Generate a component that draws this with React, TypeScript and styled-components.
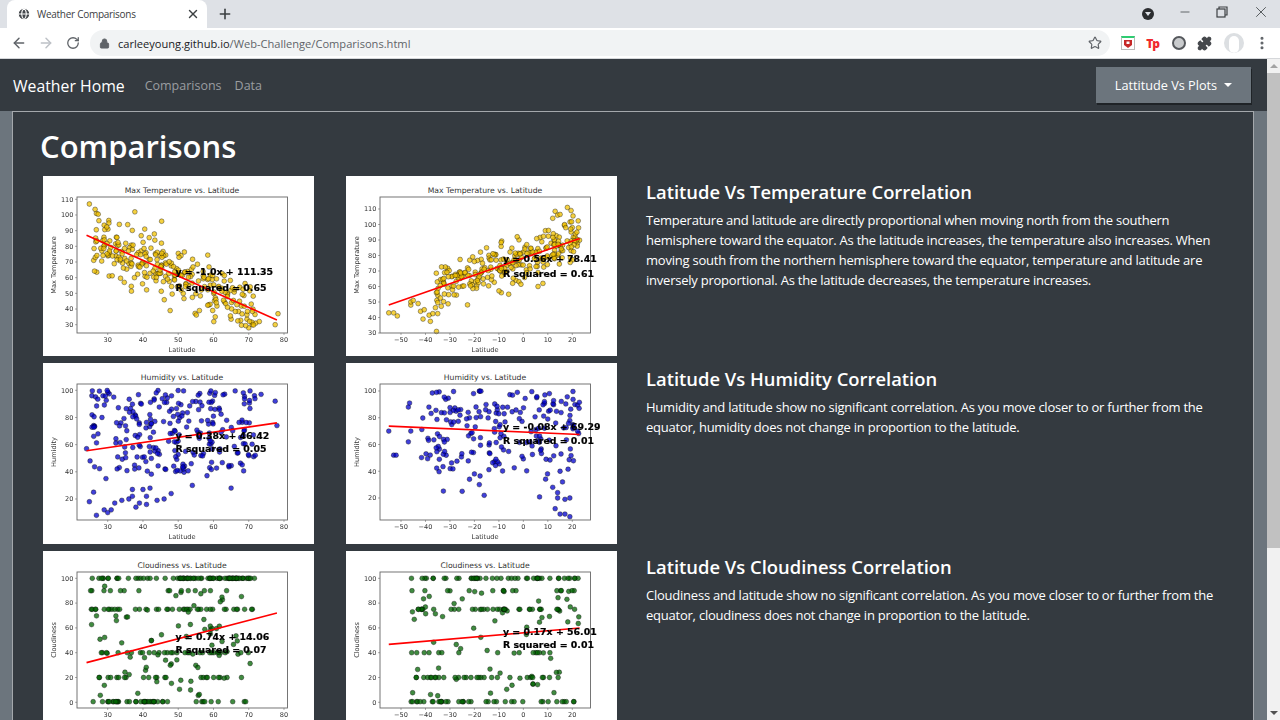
import React from "react";
import styled, { createGlobalStyle } from "styled-components";
import { ArrowLeft, ArrowRight, RotateCw, Lock, Star, Plus, X, Minus, Globe, Puzzle, EllipsisVertical } from "lucide-react";

const GlobalStyle = createGlobalStyle`
  html, body {
    margin: 0;
    height: 720px;
    overflow: hidden;
    background: #6c757d;
    font-family: "Open Sans", "Noto Sans", sans-serif;
  }
  * { box-sizing: border-box; }
`;

type Pt = [number, number];

interface ChartConfig {
  title: string;
  yLabel: string;
  color: string;
  plotX: [number, number, number, number]; // lat a, px a, lat b, px b
  plotY: [number, number, number, number];
  xTicks: number[];
  yTicks: number[];
  line: [Pt, Pt];
  notes: [string, string];
  noteX: number;
  noteY: number;
  noteGap: number;
  belowFold?: boolean;
  points: Pt[];
}

// small seeded generator so the scatter is the same every load
const rng = (seed: number) => () => {
  seed = (seed + 0x6d2b79f5) | 0;
  let t = Math.imul(seed ^ (seed >>> 15), 1 | seed);
  t = (t + Math.imul(t ^ (t >>> 7), 61 | t)) ^ t;
  return ((t ^ (t >>> 14)) >>> 0) / 4294967296;
};

const bell = (r: () => number) => (r() + r() + r()) / 1.5 - 1;

const temps = (seed: number, n: number, from: number, to: number, fn: (x: number) => number, spread: number, extra: Pt[]) => {
  const r = rng(seed);
  const out: Pt[] = [...extra];
  for (let i = 0; i < n; i++) {
    const x = from + (to - from) * r();
    out.push([x, fn(x) + bell(r) * spread]);
  }
  return out;
};

const humid = (seed: number, n: number, from: number, to: number, extra: Pt[]) => {
  const r = rng(seed);
  const out: Pt[] = [...extra];
  for (let i = 0; i < n; i++) {
    const x = from + (to - from) * r();
    out.push([x, 100 - Math.pow(r(), 1.25) * 60 - (r() > 0.85 ? r() * 20 : 0)]);
  }
  return out;
};

// cloud cover readings bunch on round values, and the low rows sit at one end of the range
const clouds = (seed: number, n: number, from: number, to: number, split: number) => {
  const r = rng(seed);
  const out: Pt[] = [];
  for (let i = 0; i < n; i++) {
    const x = from + (to - from) * r();
    const pick = r();
    if (pick < 0.24) out.push([x, 5 + r() * 90]);
    else if (pick < 0.36) out.push([x, 75]);
    else if (pick < 0.42) out.push([x, 90]);
    else if (pick < 0.5) out.push([x, 40]);
    else if (pick < 0.6) out.push([x, 20]);
    else if (x < split) out.push([x, r() > 0.35 ? 0.5 : 100]);
    else out.push([x, r() > 0.2 ? 100 : 0.5]);
  }
  return out;
};

const northX: [number, number, number, number] = [30, 64.7, 80, 241];
const southX: [number, number, number, number] = [-50, 55, 20, 226.3];
const northTicks = [30, 40, 50, 60, 70, 80];
const southTicks = [-50, -40, -30, -20, -10, 0, 10, 20];

const charts: ChartConfig[][] = [
  [
    {
      title: "Max Temperature vs. Latitude",
      yLabel: "Max Temperature",
      color: "#f2c200",
      plotX: northX,
      plotY: [110, 23.3, 30, 148.7],
      xTicks: northTicks,
      yTicks: [30, 40, 50, 60, 70, 80, 90, 100, 110],
      line: [[24, 87], [78, 33]],
      notes: ["y = -1.0x + 111.35", "R squared = 0.65"],
      noteX: 132.5,
      noteY: 99,
      noteGap: 15.7,
      points: temps(11, 270, 26, 72, (x) => 111.35 - x, 26, [
        [24.8, 107], [26.8, 101], [27.3, 100.5], [37.7, 102], [45.3, 96], [30.3, 96.5], [33.3, 94], [29, 93.5],
        [40.5, 91], [26.9, 63.5], [34.7, 57], [36.7, 54.5], [70, 28], [71, 30], [72, 31], [73, 32], [77.5, 30],
        [78.3, 37], [65, 33.5], [60.5, 35], [69.5, 33.5],
      ]),
    },
    {
      title: "Max Temperature vs. Latitude",
      yLabel: "Max Temperature",
      color: "#f2c200",
      plotX: southX,
      plotY: [110, 33, 30, 157],
      xTicks: southTicks,
      yTicks: [30, 40, 50, 60, 70, 80, 90, 100, 110],
      line: [[-55, 48], [23, 91]],
      notes: ["y = 0.56x + 78.41", "R squared = 0.61"],
      noteX: 157,
      noteY: 86,
      noteGap: 15,
      points: temps(23, 260, -36, 23, (x) => 78.41 + 0.56 * x, 20, [
        [-55, 43], [-53, 43], [-51.5, 41], [-41, 39], [-38, 37.5], [-35.5, 31], [-38.5, 41.5], [-37, 42.5],
        [-35, 42.5], [18, 111], [19.5, 109], [20.3, 105.5], [13, 108.5], [14, 106], [15, 106.5], [12, 104],
        [9, 96], [20, 98], [-6, 55], [-9, 56], [-3, 64], [6, 60], [8, 62], [6, 69], [-46, 48], [-46, 50],
        [-45, 51], [-43, 49], [-42, 44], [-40.5, 45],
      ]),
    },
  ],
  [
    {
      title: "Humidity vs. Latitude",
      yLabel: "Humidity",
      color: "#0000cd",
      plotX: northX,
      plotY: [100, 27.3, 20, 136],
      xTicks: northTicks,
      yTicks: [20, 40, 60, 80, 100],
      line: [[24, 55.5], [78, 76]],
      notes: ["y = 0.38x + 46.42", "R squared = 0.05"],
      noteX: 132.5,
      noteY: 76,
      noteGap: 13.3,
      points: humid(37, 250, 25, 72, [
        [26.8, 8], [29, 12], [30, 10], [31, 12], [32, 17], [24.8, 18], [26, 25], [29.5, 35], [34, 19], [36, 20],
        [38, 14], [39, 17], [41, 16], [44, 19], [46, 20], [41, 22], [37, 22], [48, 24], [54, 30], [65, 28],
        [37, 27], [40, 27], [42, 28], [24, 57], [25, 48], [78, 74], [77.5, 92], [73.5, 97],
      ]),
    },
    {
      title: "Humidity vs. Latitude",
      yLabel: "Humidity",
      color: "#0000cd",
      plotX: southX,
      plotY: [100, 28, 20, 135],
      xTicks: southTicks,
      yTicks: [20, 40, 60, 80, 100],
      line: [[-55, 73.7], [23, 67.5]],
      notes: ["y = -0.08x + 69.29", "R squared = 0.01"],
      noteX: 157,
      noteY: 67,
      noteGap: 14.5,
      points: humid(58, 205, -42, 23, [
        [-55, 70], [-53, 52], [-52, 52], [-47, 88], [-46.5, 91], [-47, 62], [-46, 70], [-25, 25], [-22, 34],
        [-20, 38], [-18, 30], [-16, 22], [13, 12], [14, 20], [15, 8], [17, 8], [19, 6], [12, 28], [14, 24],
        [16, 32], [17, 19], [19, 20], [15, 40],
      ]),
    },
  ],
  [
    {
      title: "Cloudiness vs. Latitude",
      yLabel: "Cloudiness",
      color: "#006400",
      plotX: northX,
      plotY: [100, 27.3, 0, 151.3],
      xTicks: northTicks,
      yTicks: [0, 20, 40, 60, 80, 100],
      line: [[24, 32], [78, 72]],
      notes: ["y = 0.74x + 14.06", "R squared = 0.07"],
      noteX: 132.5,
      noteY: 89,
      noteGap: 13,
      belowFold: true,
      points: clouds(71, 300, 25, 72, 46),
    },
    {
      title: "Cloudiness vs. Latitude",
      yLabel: "Cloudiness",
      color: "#006400",
      plotX: southX,
      plotY: [100, 27.3, 0, 151.3],
      xTicks: southTicks,
      yTicks: [0, 20, 40, 60, 80, 100],
      line: [[-55, 46.7], [23, 59.9]],
      notes: ["y = 0.17x + 56.01", "R squared = 0.01"],
      noteX: 157,
      noteY: 84,
      noteGap: 13,
      belowFold: true,
      points: clouds(89, 235, -46, 23, -22),
    },
  ],
];

const sections = [
  {
    heading: "Latitude Vs Temperature Correlation",
    body: "Temperature and latitude are directly proportional when moving north from the southern hemisphere toward the equator. As the latitude increases, the temperature also increases. When moving south from the northern hemisphere toward the equator, temperature and latitude are inversely proportional. As the latitude decreases, the temperature increases.",
  },
  {
    heading: "Latitude Vs Humidity Correlation",
    body: "Humidity and latitude show no significant correlation. As you move closer to or further from the equator, humidity does not change in proportion to the latitude.",
  },
  {
    heading: "Latitude Vs Cloudiness Correlation",
    body: "Cloudiness and latitude show no significant correlation. As you move closer to or further from the equator, cloudiness does not change in proportion to the latitude.",
  },
];

const Chart: React.FC<{ c: ChartConfig }> = ({ c }) => {
  const sx = (v: number) => c.plotX[1] + ((v - c.plotX[0]) * (c.plotX[3] - c.plotX[1])) / (c.plotX[2] - c.plotX[0]);
  const sy = (v: number) => c.plotY[1] + ((v - c.plotY[0]) * (c.plotY[3] - c.plotY[1])) / (c.plotY[2] - c.plotY[0]);
  return (
    <ChartSvg viewBox="0 0 271 180.4">
      <rect x="0" y="0" width="271" height="181" fill="#fff" />
      <text x="139" y="17" fontSize="7.7" fill="#333" textAnchor="middle" fontFamily="DejaVu Sans">{c.title}</text>
      <text transform="translate(13 89) rotate(-90)" fontSize="6.6" fill="#333" textAnchor="middle" fontFamily="DejaVu Sans">{c.yLabel}</text>
      {!c.belowFold && (
        <text x="139" y="176" fontSize="6.6" fill="#333" textAnchor="middle" fontFamily="DejaVu Sans">Latitude</text>
      )}
      {c.points.map((p, i) => (
        <circle key={i} cx={sx(p[0])} cy={sy(p[1])} r="2.4" fill={c.color} fillOpacity="0.75" stroke="#000" strokeOpacity="0.6" strokeWidth="0.6" />
      ))}
      <line x1={sx(c.line[0][0])} y1={sy(c.line[0][1])} x2={sx(c.line[1][0])} y2={sy(c.line[1][1])} stroke="#f00" strokeWidth="1.6" />
      <rect x="34" y="21" width="210.5" height="136" fill="none" stroke="#666" strokeWidth="0.9" />
      {c.xTicks.map((t) => (
        <g key={t}>
          <line x1={sx(t)} x2={sx(t)} y1="157" y2="159" stroke="#555" strokeWidth="0.5" />
          <text x={sx(t)} y="166" fontSize="6.6" fill="#333" textAnchor="middle" fontFamily="DejaVu Sans">{t < 0 ? `\u2212${-t}` : t}</text>
        </g>
      ))}
      {c.yTicks.map((t) => (
        <g key={t}>
          <line x1="32" x2="34" y1={sy(t)} y2={sy(t)} stroke="#555" strokeWidth="0.5" />
          <text x="30.5" y={sy(t) + 2.3} fontSize="6.6" fill="#333" textAnchor="end" fontFamily="DejaVu Sans">{t}</text>
        </g>
      ))}
      <Note x={c.noteX} y={c.noteY}>{c.notes[0]}</Note>
      <Note x={c.noteX} y={c.noteY + c.noteGap}>{c.notes[1]}</Note>
    </ChartSvg>
  );
};

const App: React.FC = () => {
  return (
    <>
      <GlobalStyle />
      <Window>
        <TabStrip>
          <Tab>
            <Globe size={14} color="#fff" fill="#45484c" strokeWidth={1.8} />
            <TabTitle>Weather Comparisons</TabTitle>
            <X size={14} color="#3c4043" strokeWidth={2.4} />
          </Tab>
          <NewTab><Plus size={16} color="#3c4043" strokeWidth={2.4} /></NewTab>
          <TabSpacer />
          <ProfileDot />
          <WindowControls>
            <Minus size={14} color="#3c4043" strokeWidth={1.3} />
            <svg width="12" height="12" viewBox="0 0 12 12" fill="none" stroke="#3c4043" strokeWidth="1.2">
              <rect x="1" y="3" width="8" height="8" />
              <path d="M3 3V1h8v8H9" />
            </svg>
            <X size={18} color="#3c4043" strokeWidth={1.1} />
          </WindowControls>
        </TabStrip>
        <Toolbar>
          <NavIcon><ArrowLeft size={16} color="#5f6368" strokeWidth={2.2} /></NavIcon>
          <NavIcon><ArrowRight size={16} color="#bdc1c6" strokeWidth={2.2} /></NavIcon>
          <NavIcon><RotateCw size={14} color="#5f6368" strokeWidth={2.2} /></NavIcon>
          <AddressBar>
            <Lock size={11} color="#5f6368" fill="#5f6368" />
            <UrlText><b>carleeyoung.github.io</b>/Web-Challenge/Comparisons.html</UrlText>
            <Star size={14} color="#5f6368" strokeWidth={2} />
          </AddressBar>
          <Extensions>
            <ShieldBox>
              <svg width="10" height="10" viewBox="0 0 10 10"><path d="M1 1h8v5l-4 3-4-3z" fill="#c62828" /><rect x="3.5" y="2.5" width="3" height="2.5" fill="#fff" /></svg>
            </ShieldBox>
            <TpMark>Tp</TpMark>
            <OrbMark />
            <Puzzle size={15} color="#45484c" fill="#45484c" />
            <Avatar />
            <EllipsisVertical size={16} color="#5f6368" strokeWidth={2.6} />
          </Extensions>
        </Toolbar>
        <Viewport>
          <Page>
            <NavBar>
              <Brand>Weather Home</Brand>
              <NavLink>Comparisons</NavLink>
              <NavLink>Data</NavLink>
              <Dropdown>Lattitude Vs Plots<Caret /></Dropdown>
            </NavBar>
            <Content>
              <Title>Comparisons</Title>
              {sections.map((s, i) => (
                <Row key={s.heading}>
                  <Chart c={charts[i][0]} />
                  <Chart c={charts[i][1]} />
                  <Copy>
                    <Heading>{s.heading}</Heading>
                    <Body>{s.body}</Body>
                  </Copy>
                </Row>
              ))}
            </Content>
          </Page>
          <ScrollTrack>
            <ScrollArrow $up />
            <ScrollThumb />
            <ScrollArrow />
          </ScrollTrack>
        </Viewport>
      </Window>
    </>
  );
};

const Window = styled.div`
  width: 1280px;
  height: 720px;
  display: flex;
  flex-direction: column;
  overflow: hidden;
`;

const TabStrip = styled.div`
  height: 28px;
  flex: none;
  background: #dee1e6;
  display: flex;
  align-items: flex-end;
  padding-left: 7px;
`;

const Tab = styled.div`
  width: 200px;
  height: 28px;
  background: #fff;
  border-radius: 8px 8px 0 0;
  display: flex;
  align-items: center;
  padding: 0 7px 0 10px;
  gap: 6px;
`;

const TabTitle = styled.span`
  flex: 1;
  font-size: 10px;
  letter-spacing: -0.28px;
  color: #3c4043;
  white-space: nowrap;
`;

const NewTab = styled.div`
  width: 36px;
  height: 28px;
  display: flex;
  align-items: center;
  justify-content: center;
`;

const TabSpacer = styled.div`
  flex: 1;
`;

const ProfileDot = styled.div`
  width: 12px;
  height: 12px;
  margin: 0 0 8px 0;
  border-radius: 50%;
  background: #2b2d30;
  position: relative;
  &::after {
    content: "";
    position: absolute;
    left: 3px;
    top: 4px;
    border: 3px solid transparent;
    border-top: 4px solid #dee1e6;
  }
`;

const WindowControls = styled.div`
  width: 126px;
  height: 28px;
  display: flex;
  align-items: flex-start;
  justify-content: space-between;
  padding: 5px 10px 0 24px;
  & > svg:nth-child(2) { margin-top: 1px; }
  & > svg:nth-child(3) { margin-top: -2px; }
`;

const Toolbar = styled.div`
  height: 31px;
  flex: none;
  background: #fff;
  border-bottom: 1px solid #d5d7da;
  display: flex;
  align-items: center;
  padding-left: 5px;
`;

const NavIcon = styled.div`
  width: 27px;
  height: 26px;
  display: flex;
  align-items: center;
  justify-content: center;
`;

const AddressBar = styled.div`
  width: 1020px;
  height: 26px;
  margin-left: 4px;
  background: #f1f3f4;
  border-radius: 13px;
  display: flex;
  align-items: center;
  padding: 0 8px 0 9px;
  gap: 8px;
`;

const UrlText = styled.div`
  flex: 1;
  font-size: 11.1px;
  color: #5f6368;
  white-space: nowrap;
  b {
    font-weight: 400;
    color: #202124;
  }
`;

const Extensions = styled.div`
  flex: 1;
  display: flex;
  align-items: center;
  justify-content: space-between;
  padding: 0 10px 0 11px;
`;

const ShieldBox = styled.div`
  width: 14px;
  height: 14px;
  border: 1px solid #bbb;
  border-top: 2px solid #2ecc71;
  display: flex;
  align-items: center;
  justify-content: center;
`;

const TpMark = styled.span`
  font-size: 12px;
  font-weight: 800;
  color: #f0282d;
  letter-spacing: -1px;
  margin-left: 1px;
`;

const OrbMark = styled.div`
  width: 14px;
  height: 14px;
  margin-left: 3px;
  border-radius: 50%;
  border: 2px solid #55585c;
  background: #c9cbcd;
`;

const Avatar = styled.div`
  width: 20px;
  height: 20px;
  margin-left: 2px;
  border-radius: 50%;
  background: #dcdfe2;
  position: relative;
  overflow: hidden;
  &::after {
    content: "";
    position: absolute;
    left: 5px;
    top: 3px;
    width: 10px;
    height: 17px;
    border-radius: 5px;
    background: #fff;
  }
`;

const Viewport = styled.div`
  flex: 1;
  min-height: 0;
  display: flex;
`;

const Page = styled.div`
  flex: 1;
  min-width: 0;
  background: #6c757d;
`;

const NavBar = styled.nav`
  height: 52px;
  background: #343a40;
  display: flex;
  align-items: center;
  padding: 1px 16px 0 13px;
`;

const Brand = styled.a`
  font-size: 15.8px;
  color: #fff;
  margin-right: 20px;
`;

const NavLink = styled.a`
  font-size: 12.5px;
  color: #9a9da0;
  margin-right: 13px;
`;

const Dropdown = styled.button`
  margin-left: auto;
  width: 155px;
  height: 36px;
  margin-top: -1px;
  border: none;
  background: #6c757d;
  color: #fff;
  font: inherit;
  font-size: 12.7px;
  box-shadow: 1px 2px 0 #1f2327;
  display: flex;
  align-items: center;
  justify-content: center;
  gap: 7px;
`;

const Caret = styled.span`
  border-top: 4px solid #fff;
  border-left: 4px solid transparent;
  border-right: 4px solid transparent;
`;

const Content = styled.main`
  margin: 0 13px 0 12px;
  height: 609px;
  background: #343a40;
  border: 1px solid #a4a8ac;
  border-bottom: none;
  padding: 12px 0 0 30px;
  overflow: hidden;
`;

const Title = styled.h1`
  margin: 0 0 7px -3px;
  font-size: 31px;
  line-height: 45px;
  font-weight: 600;
  color: #fff;
`;

const Row = styled.section`
  display: grid;
  grid-template-columns: 303px 303px 1fr;
  height: 187.4px;
`;

const ChartSvg = styled.svg`
  display: block;
  width: 271px;
  height: 180.4px;
  filter: blur(0.45px);
`;

const Note = styled.text`
  font-family: "DejaVu Sans", sans-serif;
  font-size: 9.4px;
  font-weight: 700;
  fill: #000;
  stroke: #000;
  stroke-width: 0.2px;
`;

const Copy = styled.div`
  padding: 3px 26px 0 0;
  margin-left: -3px;
`;

const Heading = styled.h3`
  margin: 0 0 5px;
  font-size: 18.4px;
  line-height: 26px;
  font-weight: 600;
  color: #fff;
`;

const Body = styled.p`
  margin: 0;
  font-size: 13px;
  letter-spacing: -0.23px;
  line-height: 20px;
  color: #fff;
`;

const ScrollTrack = styled.div`
  width: 13px;
  flex: none;
  background: #f1f1f1;
  display: flex;
  flex-direction: column;
  align-items: center;
`;

const ScrollArrow = styled.div<{ $up?: boolean }>`
  flex: none;
  width: 0;
  height: 4px;
  border-left: 4px solid transparent;
  border-right: 4px solid transparent;
  ${(p) =>
    p.$up
      ? "margin-top: 5px; border-bottom: 4px solid #a3a3a3;"
      : "margin-top: auto; margin-bottom: 5px; border-top: 4px solid #505050;"}
`;

const ScrollThumb = styled.div`
  width: 13px;
  height: 475px;
  margin-top: 5px;
  background: #c1c1c1;
`;

export default App;
